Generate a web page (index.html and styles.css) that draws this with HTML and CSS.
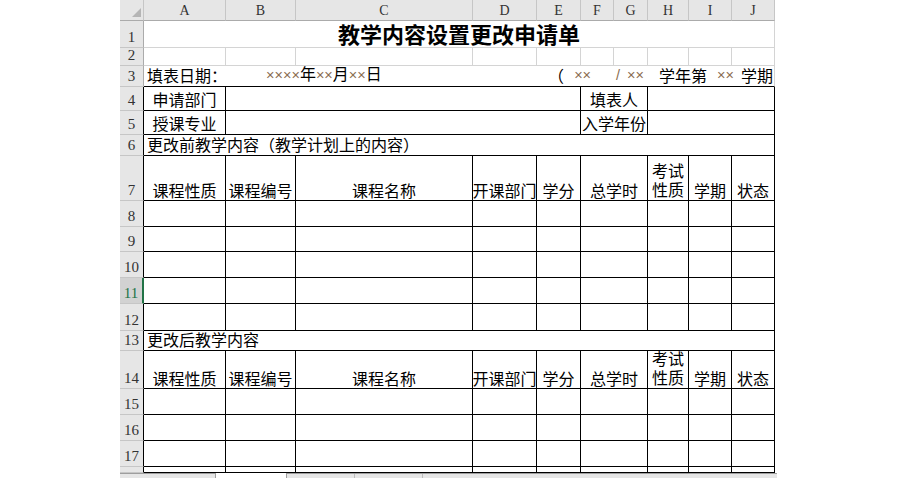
FILE: index.html
```html
<!DOCTYPE html>
<html lang="zh-CN">
<head>
<meta charset="utf-8">
<title>教学内容设置更改申请单</title>
<link rel="stylesheet" href="styles.css">
</head>
<body>
<div class="sheet">
  <!-- column headers -->
  <div class="corner"><svg width="9" height="9" viewBox="0 0 9 9"><polygon points="9,0 9,9 0,9" fill="#b5b5b5"/></svg></div>
  <div class="hd">A</div><div class="hd">B</div><div class="hd">C</div><div class="hd">D</div><div class="hd">E</div>
  <div class="hd">F</div><div class="hd">G</div><div class="hd">H</div><div class="hd">I</div><div class="hd">J</div>

  <!-- row 1 -->
  <div class="rh">1</div>
  <div class="c s10 ctr title">教学内容设置更改申请单</div>

  <!-- row 2 -->
  <div class="rh">2</div>
  <div class="c"></div><div class="c"></div><div class="c"></div><div class="c"></div><div class="c"></div>
  <div class="c"></div><div class="c"></div><div class="c"></div><div class="c"></div><div class="c"></div>

  <!-- row 3 -->
  <div class="rh">3</div>
  <div class="c s10 bk r3">
    <span class="r3a">填表日期：</span>
    <span class="r3d"><span class="x">××××</span>年<span class="x">××</span>月<span class="x">××</span>日</span>
    <span class="r3b">
      <span class="p">（</span>
      <span class="x m10">××</span>
      <span class="x m25">/</span>
      <span class="x m7">××</span>
      <span class="m15">学年第</span>
      <span class="x m10">××</span>
      <span class="m7">学期</span>
    </span>
  </div>

  <!-- row 4 -->
  <div class="rh t">4</div>
  <div class="c k ctr">申请部门</div>
  <div class="c k s4"></div>
  <div class="c k s2 ctr">填表人</div>
  <div class="c k s3"></div>

  <!-- row 5 -->
  <div class="rh t">5</div>
  <div class="c k ctr">授课专业</div>
  <div class="c k s4"></div>
  <div class="c k s2 ctr">入学年份</div>
  <div class="c k s3"></div>

  <!-- row 6 -->
  <div class="rh t">6</div>
  <div class="c k s10 left">更改前教学内容（教学计划上的内容）</div>

  <!-- row 7 -->
  <div class="rh t">7</div>
  <div class="c k ctr hdr">课程性质</div>
  <div class="c k ctr hdr">课程编号</div>
  <div class="c k ctr hdr">课程名称</div>
  <div class="c k ctr hdr">开课部门</div>
  <div class="c k ctr hdr">学分</div>
  <div class="c k s2 ctr hdr">总学时</div>
  <div class="c k ctr hdr"><span class="two">考试<br>性质</span></div>
  <div class="c k ctr hdr">学期</div>
  <div class="c k ctr hdr">状态</div>

  <!-- rows 8-12 -->
  <div class="rh t">8</div>
  <div class="c k"></div><div class="c k"></div><div class="c k"></div><div class="c k"></div><div class="c k"></div>
  <div class="c k s2"></div><div class="c k"></div><div class="c k"></div><div class="c k"></div>

  <div class="rh t">9</div>
  <div class="c k"></div><div class="c k"></div><div class="c k"></div><div class="c k"></div><div class="c k"></div>
  <div class="c k s2"></div><div class="c k"></div><div class="c k"></div><div class="c k"></div>

  <div class="rh t">10</div>
  <div class="c k"></div><div class="c k"></div><div class="c k"></div><div class="c k"></div><div class="c k"></div>
  <div class="c k s2"></div><div class="c k"></div><div class="c k"></div><div class="c k"></div>

  <div class="rh t sel">11</div>
  <div class="c k"></div><div class="c k"></div><div class="c k"></div><div class="c k"></div><div class="c k"></div>
  <div class="c k s2"></div><div class="c k"></div><div class="c k"></div><div class="c k"></div>

  <div class="rh t">12</div>
  <div class="c k"></div><div class="c k"></div><div class="c k"></div><div class="c k"></div><div class="c k"></div>
  <div class="c k s2"></div><div class="c k"></div><div class="c k"></div><div class="c k"></div>

  <!-- row 13 -->
  <div class="rh t">13</div>
  <div class="c k s10 left">更改后教学内容</div>

  <!-- row 14 -->
  <div class="rh t">14</div>
  <div class="c k ctr hdr">课程性质</div>
  <div class="c k ctr hdr">课程编号</div>
  <div class="c k ctr hdr">课程名称</div>
  <div class="c k ctr hdr">开课部门</div>
  <div class="c k ctr hdr">学分</div>
  <div class="c k s2 ctr hdr">总学时</div>
  <div class="c k ctr hdr"><span class="two">考试<br>性质</span></div>
  <div class="c k ctr hdr">学期</div>
  <div class="c k ctr hdr">状态</div>

  <!-- rows 15-17 -->
  <div class="rh t">15</div>
  <div class="c k"></div><div class="c k"></div><div class="c k"></div><div class="c k"></div><div class="c k"></div>
  <div class="c k s2"></div><div class="c k"></div><div class="c k"></div><div class="c k"></div>

  <div class="rh t">16</div>
  <div class="c k"></div><div class="c k"></div><div class="c k"></div><div class="c k"></div><div class="c k"></div>
  <div class="c k s2"></div><div class="c k"></div><div class="c k"></div><div class="c k"></div>

  <div class="rh t">17</div>
  <div class="c k"></div><div class="c k"></div><div class="c k"></div><div class="c k"></div><div class="c k"></div>
  <div class="c k s2"></div><div class="c k"></div><div class="c k"></div><div class="c k"></div>

  <!-- row 18 (partially visible) -->
  <div class="rh t"></div>
  <div class="c k"></div><div class="c k"></div><div class="c k"></div><div class="c k"></div><div class="c k"></div>
  <div class="c k s2"></div><div class="c k"></div><div class="c k"></div><div class="c k"></div>
</div>
<div class="tabs">
  <div class="tnav"></div>
  <div class="tgap"></div>
  <div class="tbar"><span class="tab"></span><span class="tab"></span></div>
</div>
</body>
</html>
```

FILE: styles.css
```css
* { box-sizing: border-box; }

html, body { margin: 0; background: #fff; }

body {
  font-family: "Noto Sans CJK SC", sans-serif;
  color: #000;
  overflow: hidden;
}

.sheet {
  margin-left: 120px;
  width: 655px;
  display: grid;
  grid-template-columns: 24px 82px 70px 177px 64px 44px 33px 34px 41px 43px 43px;
  grid-template-rows: 21px 27px 18px 21px 24px 24px 21px 45px 26px 25px 26px 26px 27px 20px 38px 26px 26px 26px 6px;
}

/* headers */
.corner {
  background: #e6e6e6;
  border-right: 1px solid #c6c6c6;
  border-bottom: 1px solid #ababab;
  display: flex;
  justify-content: flex-end;
  align-items: flex-end;
  padding: 0 2px 3px 0;
}
.corner svg { display: block; }

.hd {
  background: #e6e6e6;
  border-right: 1px solid #c6c6c6;
  border-bottom: 1px solid #ababab;
  display: flex;
  justify-content: center;
  align-items: center;
  font-family: "Liberation Serif", serif;
  font-size: 14px;
  color: #333;
  padding-top: 1px;
}

.rh {
  background: #e6e6e6;
  border-right: 1px solid #ababab;
  border-bottom: 1px solid #c6c6c6;
  display: flex;
  justify-content: center;
  align-items: flex-end;
  font-family: "Liberation Serif", serif;
  font-size: 15px;
  line-height: 16px;
  color: #333;
  padding-bottom: 2px;
  overflow: hidden;
}
.rh.t { border-right-color: #000; }
.rh.sel {
  background: #d2d2d2;
  color: #217346;
  border-right: 2px solid #217346;
}

/* cells */
.c {
  border-right: 1px solid #d4d4d4;
  border-bottom: 1px solid #d4d4d4;
  display: flex;
  align-items: flex-end;
  font-size: 16px;
  line-height: 18px;
  padding-bottom: 2px;
  white-space: nowrap;
  min-width: 0;
}
.k { border-right-color: #000; border-bottom-color: #000; }
.bk { border-bottom-color: #000; }
.ctr { justify-content: center; }
.left { padding-left: 3px; }
.hdr { padding-bottom: 1px; }

.s2 { grid-column: span 2; }
.s3 { grid-column: span 3; }
.s4 { grid-column: span 4; }
.s10 { grid-column: span 10; }

.title {
  font-size: 22px;
  font-weight: bold;
  line-height: 26px;
  padding-bottom: 1px;
  letter-spacing: 0;
}

.two {
  display: block;
  line-height: 19px;
  text-align: center;
}

/* row 3 */
.r3 { padding-bottom: 2px; }
.r3a { width: 122px; padding-left: 3px; flex: none; }
.r3d { flex: none; }
.r3b { margin-left: auto; padding-right: 1px; display: flex; align-items: flex-end; }
.x {
  font-family: "Liberation Sans", sans-serif;
  font-size: 14.5px;
  color: #8a6d50;
}
.m7 { margin-left: 7px; }
.m10 { margin-left: 10px; }
.m15 { margin-left: 15px; }
.m25 { margin-left: 25px; }

/* sheet tabs strip */
.tabs {
  margin-left: 120px;
  width: 657px;
  height: 5px;
  display: flex;
}
.tnav {
  width: 96px;
  background: #e6e6e6;
  border-top: 1px solid #9e9e9e;
  border-right: 1px solid #9e9e9e;
}
.tgap { width: 70px; background: #fff; }
.tbar {
  flex: 1;
  background: #e6e6e6;
  border-top: 1px solid #9e9e9e;
  border-left: 1px solid #9e9e9e;
  display: flex;
}
.tab {
  width: 68px;
  border-right: 1px solid #bdbdbd;
}
```
